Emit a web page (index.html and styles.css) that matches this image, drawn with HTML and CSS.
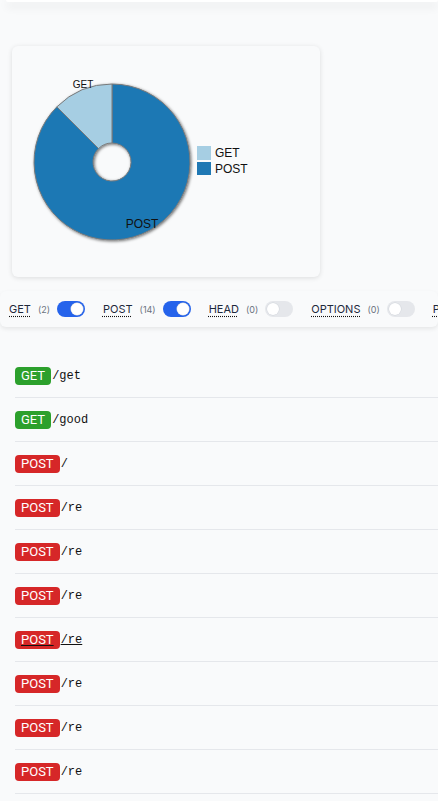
FILE: index.html
```html
<!DOCTYPE html>
<html>
<head>
    <title>Routes</title>
    <link rel="stylesheet" href="styles.css">
</head>
<body>
    <div class="top-card"></div>

    <div class="chart-card">
        <svg class="chart" width="308" height="231" viewBox="0 0 308 231">
            <defs>
                <filter id="pie-shadow" x="-20%" y="-20%" width="140%" height="140%">
                    <feDropShadow dx="1" dy="1" stdDeviation="1.4" flood-color="#000" flood-opacity="0.55"/>
                </filter>
            </defs>
            <g filter="url(#pie-shadow)" stroke="#7a7a7a" stroke-width="1">
                <path fill="#1f78b4" d="M100,38 A78,78 0 1 1 44.85,60.85 L86.57,102.57 A19,19 0 1 0 100,97 Z"/>
                <path fill="#a6cee3" d="M44.85,60.85 A78,78 0 0 1 100,38 L100,97 A19,19 0 0 0 86.57,102.57 Z"/>
            </g>
            <text class="slice-label small" x="71" y="42" text-anchor="middle">GET</text>
            <text class="slice-label" x="130" y="182" text-anchor="middle">POST</text>

            <rect x="185" y="100" width="14" height="14" fill="#a6cee3"/>
            <text class="legend-label" x="203" y="111">GET</text>
            <rect x="185" y="116" width="14" height="13" fill="#1f78b4"/>
            <text class="legend-label" x="203" y="127">POST</text>
        </svg>
    </div>

    <div class="filters">
        <div class="filter">
            <span class="method">GET</span><span class="count">(2)</span>
            <span class="switch on"><span class="knob"></span></span>
        </div>
        <div class="filter">
            <span class="method">POST</span><span class="count">(14)</span>
            <span class="switch on"><span class="knob"></span></span>
        </div>
        <div class="filter">
            <span class="method">HEAD</span><span class="count">(0)</span>
            <span class="switch"><span class="knob"></span></span>
        </div>
        <div class="filter">
            <span class="method">OPTIONS</span><span class="count">(0)</span>
            <span class="switch"><span class="knob"></span></span>
        </div>
        <div class="filter">
            <span class="method">PUT</span><span class="count">(0)</span>
            <span class="switch"><span class="knob"></span></span>
        </div>
    </div>

    <ul class="routes">
        <li class="route"><a href="#"><span class="badge get">GET</span><span class="path">/get</span></a></li>
        <li class="route"><a href="#"><span class="badge get">GET</span><span class="path">/good</span></a></li>
        <li class="route"><a href="#"><span class="badge post">POST</span><span class="path">/</span></a></li>
        <li class="route"><a href="#"><span class="badge post">POST</span><span class="path">/re</span></a></li>
        <li class="route"><a href="#"><span class="badge post">POST</span><span class="path">/re</span></a></li>
        <li class="route"><a href="#"><span class="badge post">POST</span><span class="path">/re</span></a></li>
        <li class="route hover"><a href="#"><span class="badge post">POST</span><span class="path">/re</span></a></li>
        <li class="route"><a href="#"><span class="badge post">POST</span><span class="path">/re</span></a></li>
        <li class="route"><a href="#"><span class="badge post">POST</span><span class="path">/re</span></a></li>
        <li class="route"><a href="#"><span class="badge post">POST</span><span class="path">/re</span></a></li>
        <li class="route"><a href="#"><span class="badge post">POST</span><span class="path">/re</span></a></li>
    </ul>
</body>
</html>
```

FILE: styles.css
```css
body {
    margin: 0;
    background: #f9fafb;
    font-family: Inter, "Noto Sans", sans-serif;
    color: #1f2937;
    overflow: hidden;
}

.top-card {
    height: 2px;
    margin-left: 6px;
    background: #fff;
    border-radius: 0 0 6px 6px;
    box-shadow: 0 4px 10px rgba(0, 0, 0, 0.16);
}

.chart-card {
    width: 308px;
    height: 231px;
    margin: 44px 0 0 12px;
    background: #f9fafb;
    border-radius: 6px;
    box-shadow: 0 1px 5px rgba(0, 0, 0, 0.12);
}
.chart {
    display: block;
}
.slice-label {
    font-family: "Liberation Sans", Arial, sans-serif;
    font-size: 12px;
    fill: #111;
}
.slice-label.small {
    font-size: 10px;
}
.legend-label {
    font-family: "Liberation Sans", Arial, sans-serif;
    font-size: 12px;
    fill: #111;
}

.filters {
    display: flex;
    align-items: center;
    gap: 18px;
    height: 36px;
    margin-top: 14px;
    padding-left: 9px;
    background: #f9fafb;
    border-radius: 6px;
    box-shadow: 0 2px 4px rgba(0, 0, 0, 0.08);
    white-space: nowrap;
    overflow: hidden;
}
.filter {
    display: flex;
    align-items: center;
    flex-shrink: 0;
}
.method {
    font-size: 11px;
    color: #1e293b;
    text-decoration: underline dotted #111;
    text-underline-offset: 3px;
}
.count {
    margin-left: 7px;
    font-size: 9px;
    color: #6b7280;
}
.switch {
    position: relative;
    width: 28px;
    height: 16px;
    margin-left: 7px;
    background: #e5e7eb;
    border-radius: 8px;
}
.switch.on {
    background: #2563eb;
}
.knob {
    position: absolute;
    top: 2px;
    left: 2px;
    width: 12px;
    height: 12px;
    background: #fff;
    border-radius: 50%;
    box-shadow: 0 0 0 0.5px #d1d5db;
}
.switch.on .knob {
    left: 14px;
}

.routes {
    list-style: none;
    margin: 27px 0 0;
    padding: 0 0 0 15px;
}
.route {
    box-sizing: border-box;
    height: 44px;
    border-bottom: 1px solid #e5e7eb;
    display: flex;
    align-items: center;
}
.route a {
    display: flex;
    align-items: center;
    color: #111;
    text-decoration: none;
}
.badge {
    display: inline-block;
    height: 18px;
    line-height: 18px;
    padding: 0 6px;
    border-radius: 4px;
    color: #fff;
    font-family: Roboto, "Liberation Sans", sans-serif;
    font-size: 13px;
}
.badge.get {
    background: #2ca02c;
}
.badge.post {
    background: #d62728;
}
.path {
    margin-left: 1px;
    font-family: "Liberation Mono", monospace;
    font-size: 12px;
    color: #111;
}
.route.hover .badge,
.route.hover .path {
    text-decoration: underline;
    text-decoration-color: #111;
}
```
